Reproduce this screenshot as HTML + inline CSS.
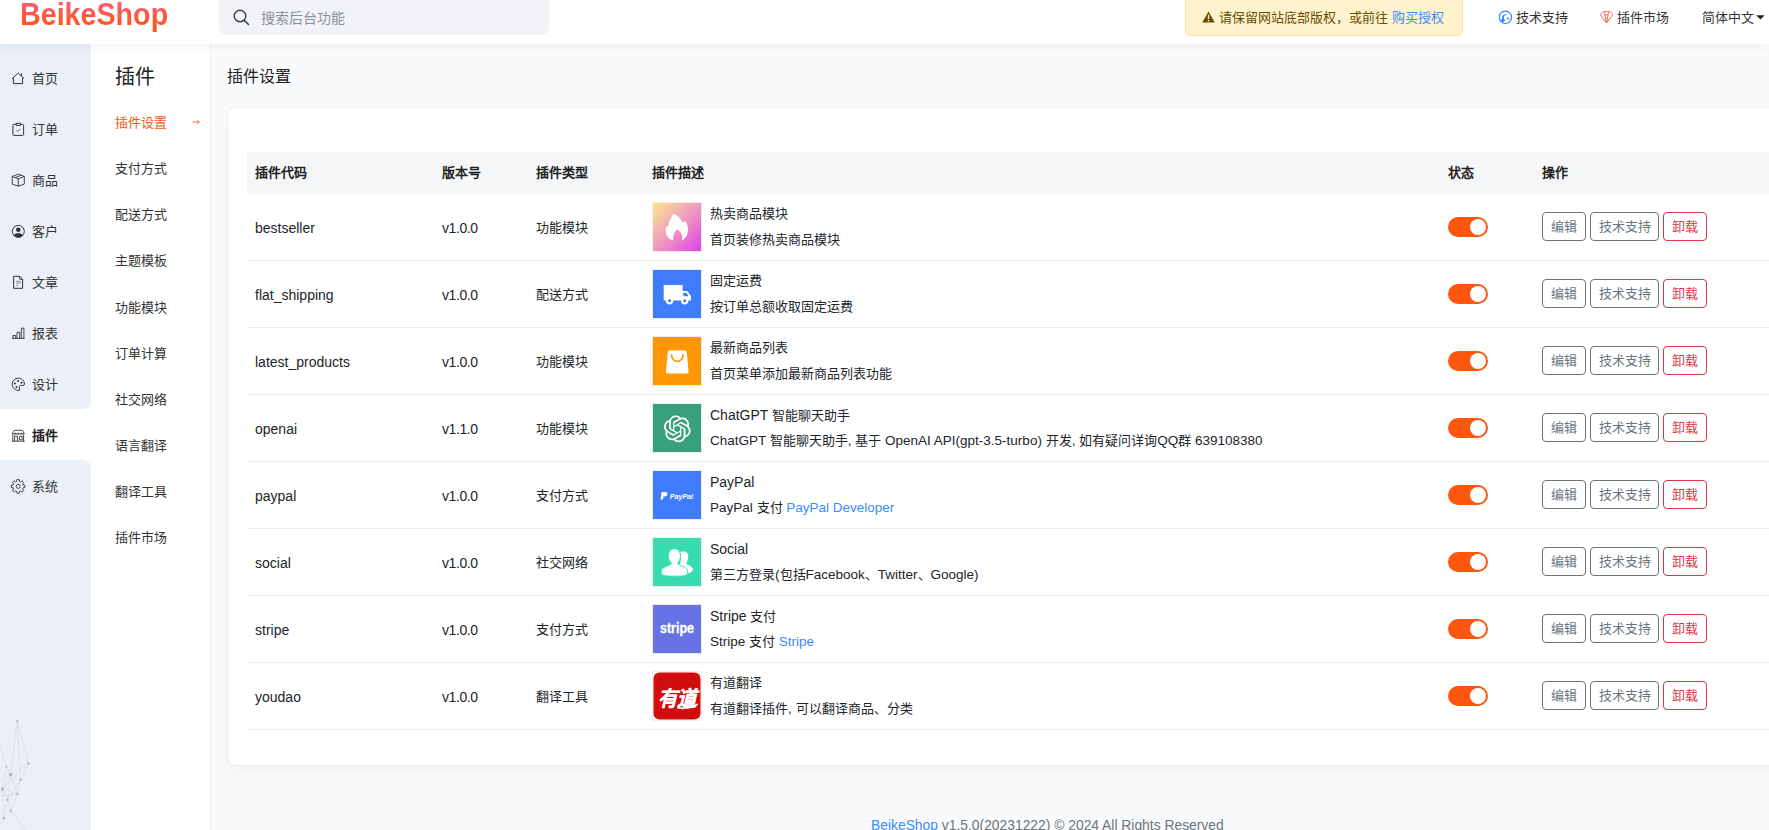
<!DOCTYPE html>
<html lang="zh-CN"><head><meta charset="utf-8">
<style>
*{box-sizing:border-box;margin:0;padding:0}
html,body{width:1769px;height:830px;overflow:hidden}
body{font-family:"Liberation Sans",sans-serif;font-size:13px;color:#212529;background:#f8fafc;position:relative}
.abs{position:absolute}
.nw{white-space:nowrap}
/* header */
#hd{left:0;top:0;width:1769px;height:44px;background:#fff;box-shadow:0 2px 12px rgba(0,0,0,.05);z-index:5}
#logo{left:20px;top:-4.3px;font-size:31.5px;font-weight:bold;line-height:36px;transform:scaleX(0.91);transform-origin:0 0;background:linear-gradient(180deg,#ff5a70 20%,#fd5619 85%);-webkit-background-clip:text;background-clip:text;color:transparent}
#search{left:219px;top:-6px;width:330px;height:41px;background:#f1f3f7;border-radius:8px}
#search .ph{left:42px;top:14px;font-size:14px;color:#8b9099;line-height:20px}
#alert{left:1185px;top:-6px;width:278px;height:42px;background:#fff3cd;border:1px solid #ffe69c;border-radius:5px;color:#664d03}
.hl{top:8px;line-height:20px;font-size:13px;color:#333}
/* sidebar */
#sb1a{left:0;top:44px;width:91px;height:365px;background:#ebeff8;border-bottom-right-radius:8px}
#sb1b{left:0;top:460px;width:91px;height:370px;background:#ebeff8;border-top-right-radius:8px}
#sb2{left:91px;top:44px;width:120px;height:786px;background:#fff;border-right:1px solid #efefef}
.mi{left:0;width:91px;height:51px}
.mi svg{position:absolute}
.mi span{position:absolute;left:32px;top:17px;line-height:20px;font-size:13px;color:#333}
.si{left:115px;line-height:20px;font-size:13px;color:#333}
/* content */
#ptitle{left:227px;top:66px;font-size:16px;line-height:22px;color:#222}
#card{left:228px;top:108px;width:1660px;height:657px;background:#fff;border-radius:6px;box-shadow:0 0 1.5px rgba(0,0,0,.13),0 5px 18px rgba(0,0,0,.04)}
#thead{left:247px;top:152px;width:1640px;height:42px;background:#f5f6f8}
.th{top:163px;line-height:20px;font-weight:bold;font-size:13px;color:#222}
.rowb{left:247px;width:1640px;height:1px;background:#e9ecef}
.cell{line-height:20px;font-size:13px;color:#212529}
.img{left:652px;width:50px;height:50px;border:1px solid #eceef0;overflow:hidden}
.img svg{display:block}
.ttl{left:710px;line-height:20px;font-size:13px;color:#212529}
.dsc{left:710px;line-height:20px;font-size:13px;color:#212529}
.lnk{color:#3b8cff}
.L{font-size:13.5px}
.L14{font-size:14px}
.tg{left:1448px;width:40px;height:20px;border-radius:10px;background:#fd560f}
.tg:after{content:"";position:absolute;left:21.5px;top:2px;width:16px;height:16px;border-radius:50%;background:#fff}
.btn{height:29px;border:1px solid #6c757d;border-radius:4px;color:#6c757d;font-size:13px;line-height:27px;text-align:center}
.btn.d{border-color:#dc3545;color:#dc3545}
#foot{left:871px;top:815px;font-size:13.85px;line-height:20px;color:#6c757d}
</style></head><body>
<div id="hd" class="abs">
  <div id="logo" class="abs nw">BeikeShop</div>
  <div id="search" class="abs">
    <svg class="abs" style="left:14px;top:15px" width="17" height="17" viewBox="0 0 17 17"><circle cx="7" cy="7" r="5.8" fill="none" stroke="#3a3f47" stroke-width="1.4"/><line x1="11.2" y1="11.2" x2="15.5" y2="15.5" stroke="#3a3f47" stroke-width="1.6" stroke-linecap="round"/></svg>
    <div class="ph abs nw">搜索后台功能</div>
  </div>
  <div id="alert" class="abs nw">
    <svg class="abs" style="left:16px;top:16px" width="13" height="12" viewBox="0 0 13 12"><path d="M6.5 0.5 L12.8 11.5 L0.2 11.5 Z" fill="#664d03"/><rect x="5.8" y="3.8" width="1.4" height="4.2" fill="#fff3cd"/><rect x="5.8" y="9" width="1.4" height="1.4" fill="#fff3cd"/></svg>
    <span class="abs" style="left:33px;top:13px;line-height:20px">请保留网站底部版权，或前往 <span class="lnk">购买授权</span></span>
  </div>
  <svg class="abs" style="left:1495px;top:5px" width="25" height="25" viewBox="0 0 25 25"><circle cx="10.4" cy="12.3" r="6.2" fill="none" stroke="#2f88ff" stroke-width="1.2"/><path d="M5.6 15.8 L8.2 17.6 C8.8 16.4,9.5 15.6,10.5 15.2 C9.6 14.6,8.6 13.6,8.8 12 C9.1 10.6,10.5 10,12.7 9.5 C11.8 9,10 9,8.6 9.8 C7.2 10.6,6.8 12,7.2 13.6 Z" fill="#2f88ff"/><circle cx="13" cy="13.5" r="1.1" fill="#2f88ff"/></svg>
  <div class="hl abs nw" style="left:1516px">技术支持</div>
  <svg class="abs" style="left:1596px;top:5px" width="25" height="25" viewBox="0 0 25 25"><defs><linearGradient id="dg" x1="0" y1="0" x2="0" y2="1"><stop offset="0" stop-color="#ff6a7a"/><stop offset="1" stop-color="#ff5410"/></linearGradient></defs><path d="M7.2 6.6 H14.5 L16.8 9.9 L10.5 18 L4.2 9.9 Z M8.2 6.8 L10.5 17.6 L12.8 6.8 M8.8 9.9 H12.4" fill="none" stroke="url(#dg)" stroke-width="0.95" stroke-linejoin="round"/></svg>
  <div class="hl abs nw" style="left:1617px">插件市场</div>
  <div class="hl abs nw" style="left:1702px">简体中文</div>
  <svg class="abs" style="left:1756px;top:15px" width="9" height="5" viewBox="0 0 9 5"><path d="M0.2 0.3 L8.6 0.3 L4.4 4.6 Z" fill="#222"/></svg>
</div>

<div class="abs" style="left:0;top:44px;width:91px;height:786px;background:#fff"></div>
<div id="sb1a" class="abs"></div>
<div id="sb1b" class="abs"></div>
<div id="sb2" class="abs"></div>
<!-- left menu -->
<div class="abs" style="left:0;top:0;width:91px;height:830px">
 <div class="mi abs" style="top:52px"><svg width="22" height="22" viewBox="0 0 22 22" style="left:8px;top:16px"><path d="M5.4 9.6 V15.6 H14.6 V9.6 M4.2 10.6 L10.3 5 L16.1 10.6 M13.5 5.4 V8" fill="none" stroke="#333" stroke-width="1"/></svg><span>首页</span></div>
 <div class="mi abs" style="top:103px"><svg width="22" height="22" viewBox="0 0 22 22" style="left:8px;top:16px"><path d="M8.2 5.3 H5.9 Q4.9 5.3 4.9 6.3 V15.4 Q4.9 16.4 5.9 16.4 H14.6 Q15.6 16.4 15.6 15.4 V6.3 Q15.6 5.3 14.6 5.3 H12.5 M8.2 4.3 H12.5 V6.4 H8.2 Z" fill="none" stroke="#333" stroke-width="1"/><path d="M8.2 11.3 L9.4 12.5 L12.7 10" fill="none" stroke="#555" stroke-width="0.8"/></svg><span>订单</span></div>
 <div class="mi abs" style="top:154px"><svg width="22" height="22" viewBox="0 0 22 22" style="left:8px;top:16px"><path d="M10.2 4.2 L16.3 6.4 V14.1 L10.3 16.2 L4.2 14.1 V6.4 Z M4.2 6.4 L10.3 8.8 L16.3 6.4 M10.3 8.8 V16.2 M7.2 7.6 L13.2 5.2" fill="none" stroke="#333" stroke-width="0.9" stroke-linejoin="round"/></svg><span>商品</span></div>
 <div class="mi abs" style="top:205px"><svg width="22" height="22" viewBox="0 0 22 22" style="left:8px;top:16px"><circle cx="10.3" cy="10.3" r="6" fill="none" stroke="#333" stroke-width="1"/><circle cx="10.3" cy="8.7" r="2.3" fill="#333"/><path d="M5.6 14.5 C6.5 12.8,8 12.2,10.3 12.2 C12.6 12.2,14.1 12.8,15 14.5 C13.8 15.8,12.2 16.4,10.3 16.4 C8.4 16.4,6.8 15.8,5.6 14.5 Z" fill="#333"/></svg><span>客户</span></div>
 <div class="mi abs" style="top:256px"><svg width="22" height="22" viewBox="0 0 22 22" style="left:8px;top:16px"><path d="M5.6 4.3 H11.6 L14.6 7.4 V16.3 H5.6 Z M11.6 4.3 V6.6 Q11.6 7.4 12.4 7.4 H14.6" fill="none" stroke="#333" stroke-width="1"/><path d="M8 9.3 H12.8 M8 11.1 H12.8 M8 13.4 H10" stroke="#777" stroke-width="0.8"/></svg><span>文章</span></div>
 <div class="mi abs" style="top:307px"><svg width="22" height="22" viewBox="0 0 22 22" style="left:8px;top:16px"><path d="M4 15.4 H16.7 M5 15.4 V12.5 H7.7 V15.4 M9 15.4 V9.3 H11.7 V15.4 M13.3 15.4 V5.2 H15.9 V15.4" fill="none" stroke="#333" stroke-width="0.9"/></svg><span>报表</span></div>
 <div class="mi abs" style="top:358px"><svg width="22" height="22" viewBox="0 0 22 22" style="left:8px;top:16px"><path d="M11.4 16.3 C7.5 16.8,4.2 14,4.2 10.2 C4.2 6.8,7 4.2,10.3 4.2 C13.7 4.2,16.4 6.8,16.4 10 Q16.4 11.3,15.2 11.4 L12.4 11.5 Q11.4 11.6,11.4 12.6 Z" fill="none" stroke="#333" stroke-width="1"/><circle cx="10.1" cy="6.9" r="1" fill="#333"/><circle cx="6.9" cy="9.5" r="1" fill="#333"/><circle cx="13.5" cy="8.8" r="1" fill="#333"/><circle cx="8.5" cy="13" r="1" fill="#333"/></svg><span>设计</span></div>
 <div class="mi abs" style="top:409px"><svg width="22" height="22" viewBox="0 0 22 22" style="left:8px;top:16px"><path d="M6.4 5.3 H14.3 Q15.5 6.5 16.3 9 H4.3 Q5.1 6.5 6.4 5.3 Z M4.8 9.6 V16.2 M15.6 9.6 V16.2 M4 16.2 H16.7 M6.6 16.2 V11.2 H9.4 V16.2 M11.4 11.4 H14.2 V14.8 H11.4 Z" fill="none" stroke="#333" stroke-width="0.9"/><path d="M6.5 9 L7.2 7.8 L7.9 9 M9.6 9 L10.3 7.8 L11 9 M12.8 9 L13.5 7.8 L14.2 9" fill="#333" stroke="#333" stroke-width="0.6"/></svg><span style="font-weight:bold;color:#222">插件</span></div>
 <div class="mi abs" style="top:460px"><svg width="22" height="22" viewBox="0 0 22 22" style="left:8px;top:16px"><path d="M15.00 8.99 L16.90 9.20 L16.90 11.60 L15.00 11.81 L14.56 12.87 L15.75 14.36 L14.06 16.05 L12.57 14.86 L11.51 15.30 L11.30 17.20 L8.90 17.20 L8.69 15.30 L7.63 14.86 L6.14 16.05 L4.45 14.36 L5.64 12.87 L5.20 11.81 L3.30 11.60 L3.30 9.20 L5.20 8.99 L5.64 7.93 L4.45 6.44 L6.14 4.75 L7.63 5.94 L8.69 5.50 L8.90 3.60 L11.30 3.60 L11.51 5.50 L12.57 5.94 L14.06 4.75 L15.75 6.44 L14.56 7.93 Z" fill="none" stroke="#333" stroke-width="0.9" stroke-linejoin="round"/><circle cx="10.2" cy="10.4" r="2" fill="none" stroke="#333" stroke-width="0.9"/></svg><span>系统</span></div>
 <svg class="abs" style="left:0;top:714px" width="40" height="116" viewBox="0 0 40 116"><path d="M17.2 7.1 L10.7 60.4 M17.2 7.1 L20.7 65.6 M17.2 7.1 L28.5 49.4 M28.5 49.4 L10.7 60.4 M28.5 49.4 L2.4 75 M28.5 49.4 L20.7 65.6 M10.7 60.4 L2.4 75 M10.7 60.4 L7.5 86 M10.7 60.4 L17.5 79.7 M2.4 75 L17.5 79.7 M2.4 75 L7.5 86 M20.7 65.6 L7.5 86 M20.7 65.6 L17.5 79.7 M17.5 79.7 L10.7 97 M7.5 86 L10.7 97 M7.5 86 L3.9 104.3 M10.7 97 L25 116 M2.4 75 L3.9 104.3 M0 30 L6.3 53 M6.3 53 L2.4 75 M0 82 L17.5 79.7 M0 66 L10.7 60.4 M3.9 104.3 L0 112 M6.3 53 L10.7 60.4" stroke="#d3d6db" stroke-width="0.6" fill="none"/><g fill="#b5b8bd"><circle cx="17.2" cy="7.1" r="1.2"/><circle cx="28.5" cy="49.4" r="1.2"/><circle cx="10.7" cy="60.4" r="1.7"/><circle cx="6.3" cy="53" r="0.9"/><circle cx="20.7" cy="65.6" r="1.2"/><circle cx="2.4" cy="75" r="1.6"/><circle cx="17.5" cy="79.7" r="1.2"/><circle cx="7.5" cy="86" r="1.2"/><circle cx="10.7" cy="97" r="1.2"/><circle cx="3.9" cy="104.3" r="1.2"/></g></svg>
</div>

<!-- second menu -->
<div class="abs nw" style="left:115px;top:64px;font-size:20px;line-height:26px;color:#222">插件</div>
<div class="si abs nw" style="top:113px;color:#fd560f">插件设置</div>
<svg class="abs" style="left:192px;top:119px" width="8" height="6" viewBox="0 0 8 6"><path d="M0.3 3 H7.3 M4.8 0.7 L7.3 3 L4.8 5.3" fill="none" stroke="#fd560f" stroke-width="0.8"/></svg>
<div class="si abs nw" style="top:159px">支付方式</div>
<div class="si abs nw" style="top:205px">配送方式</div>
<div class="si abs nw" style="top:251px">主题模板</div>
<div class="si abs nw" style="top:298px">功能模块</div>
<div class="si abs nw" style="top:344px">订单计算</div>
<div class="si abs nw" style="top:390px">社交网络</div>
<div class="si abs nw" style="top:436px">语言翻译</div>
<div class="si abs nw" style="top:482px">翻译工具</div>
<div class="si abs nw" style="top:528px">插件市场</div>

<!-- content -->
<div id="ptitle" class="abs nw">插件设置</div>
<div id="card" class="abs"></div>
<div id="thead" class="abs"></div>
<div class="th abs nw" style="left:255px">插件代码</div>
<div class="th abs nw" style="left:442px">版本号</div>
<div class="th abs nw" style="left:536px">插件类型</div>
<div class="th abs nw" style="left:652px">插件描述</div>
<div class="th abs nw" style="left:1448px">状态</div>
<div class="th abs nw" style="left:1542px">操作</div>
<div class="cell abs nw" style="left:255px;top:218px;font-size:14px">bestseller</div>
<div class="cell abs nw" style="left:442px;top:218px;font-size:14px;letter-spacing:-0.4px">v1.0.0</div>
<div class="cell abs nw" style="left:536px;top:218px">功能模块</div>
<div class="img abs" style="top:202px"><svg width="48" height="48" viewBox="0 0 48 48"><defs><linearGradient id="g1" x1="0" y1="0" x2="1" y2="1"><stop offset="0" stop-color="#fbe98a"/><stop offset="0.5" stop-color="#ef9ac0"/><stop offset="1" stop-color="#e040e6"/></linearGradient></defs><rect width="48" height="48" fill="url(#g1)"/><path d="M20.7 10.5 C24.5 12.5,28 15.5,29.4 19.6 C30.5 19,31.8 18.5,32.4 17.8 C34.5 21,35.2 25,34.9 28.5 C34.5 33,32 36,29 37.2 C30 32,27.5 28,24.4 26.5 C21.5 28.5,19.5 32.5,20.3 37.5 C16 36.5,13 33,12.7 28.5 C12.5 26,13 24,13.9 22.4 C14.5 23,15 23.2,15.3 23.5 C15.5 19,18 15,20.7 10.5 Z" fill="#fff"/></svg></div>
<div class="ttl abs nw" style="top:204px">热卖商品模块</div>
<div class="dsc abs nw" style="top:230px">首页装修热卖商品模块</div>
<div class="tg abs" style="top:217px"></div>
<div class="btn abs nw" style="left:1542px;top:212px;width:44px">编辑</div>
<div class="btn abs nw" style="left:1590px;top:212px;width:69px">技术支持</div>
<div class="btn d abs nw" style="left:1663px;top:212px;width:44px">卸载</div>
<div class="rowb abs" style="top:260px"></div>
<div class="cell abs nw" style="left:255px;top:285px;font-size:14px">flat_shipping</div>
<div class="cell abs nw" style="left:442px;top:285px;font-size:14px;letter-spacing:-0.4px">v1.0.0</div>
<div class="cell abs nw" style="left:536px;top:285px">配送方式</div>
<div class="img abs" style="top:269px"><svg width="48" height="48" viewBox="0 0 48 48"><rect width="48" height="48" fill="#3f7cfb"/><path d="M10.7 15 H29.6 V21 H34.2 L37.9 26 V30.6 H10.7 Z" fill="#fff"/><path d="M30.4 22.8 H33.4 L35.6 26.3 H30.4 Z" fill="#3f7cfb"/><circle cx="16.6" cy="30.7" r="3.7" fill="#fff"/><circle cx="16.6" cy="30.7" r="1.5" fill="#3f7cfb"/><circle cx="31.7" cy="30.7" r="3.7" fill="#fff"/><circle cx="31.7" cy="30.7" r="1.5" fill="#3f7cfb"/></svg></div>
<div class="ttl abs nw" style="top:271px">固定运费</div>
<div class="dsc abs nw" style="top:297px">按订单总额收取固定运费</div>
<div class="tg abs" style="top:284px"></div>
<div class="btn abs nw" style="left:1542px;top:279px;width:44px">编辑</div>
<div class="btn abs nw" style="left:1590px;top:279px;width:69px">技术支持</div>
<div class="btn d abs nw" style="left:1663px;top:279px;width:44px">卸载</div>
<div class="rowb abs" style="top:327px"></div>
<div class="cell abs nw" style="left:255px;top:352px;font-size:14px">latest_products</div>
<div class="cell abs nw" style="left:442px;top:352px;font-size:14px;letter-spacing:-0.4px">v1.0.0</div>
<div class="cell abs nw" style="left:536px;top:352px">功能模块</div>
<div class="img abs" style="top:336px"><svg width="48" height="48" viewBox="0 0 48 48"><rect width="48" height="48" fill="#ff9702"/><path d="M18.5 13.5 H32 Q33.5 13.5 33.7 15 L35.6 34.5 Q35.7 36.5 33.8 36.5 H14.6 Q12.7 36.5 12.9 34.5 L14.8 15 Q15 13.5 16.5 13.5 Z" fill="#fff"/><path d="M18.6 17.8 Q19 24.3 24.3 24.3 Q29.6 24.3 30 17.8" fill="none" stroke="#ff9702" stroke-width="1.7" stroke-linecap="round"/></svg></div>
<div class="ttl abs nw" style="top:338px">最新商品列表</div>
<div class="dsc abs nw" style="top:364px">首页菜单添加最新商品列表功能</div>
<div class="tg abs" style="top:351px"></div>
<div class="btn abs nw" style="left:1542px;top:346px;width:44px">编辑</div>
<div class="btn abs nw" style="left:1590px;top:346px;width:69px">技术支持</div>
<div class="btn d abs nw" style="left:1663px;top:346px;width:44px">卸载</div>
<div class="rowb abs" style="top:394px"></div>
<div class="cell abs nw" style="left:255px;top:419px;font-size:14px">openai</div>
<div class="cell abs nw" style="left:442px;top:419px;font-size:14px;letter-spacing:-0.4px">v1.1.0</div>
<div class="cell abs nw" style="left:536px;top:419px">功能模块</div>
<div class="img abs" style="top:403px"><svg width="48" height="48" viewBox="0 0 48 48"><rect width="48" height="48" fill="#38a07b"/><g transform="translate(10.8,11.4) scale(1.12)"><path fill="#fff" d="M22.2819 9.8211a5.9847 5.9847 0 0 0-.5157-4.9108 6.0462 6.0462 0 0 0-6.5098-2.9A6.0651 6.0651 0 0 0 4.9807 4.1818a5.9847 5.9847 0 0 0-3.9977 2.9 6.0462 6.0462 0 0 0 .7427 7.0966 5.98 5.98 0 0 0 .511 4.9107 6.051 6.051 0 0 0 6.5146 2.9001A5.9847 5.9847 0 0 0 13.2599 24a6.0557 6.0557 0 0 0 5.7718-4.2058 5.9894 5.9894 0 0 0 3.9977-2.9001 6.0557 6.0557 0 0 0-.7475-7.0729zm-9.022 12.6081a4.4755 4.4755 0 0 1-2.8764-1.0408l.1419-.0804 4.7783-2.7582a.7948.7948 0 0 0 .3927-.6813v-6.7369l2.02 1.1686a.071.071 0 0 1 .038.052v5.5826a4.504 4.504 0 0 1-4.4945 4.4944zm-9.6607-4.1254a4.4708 4.4708 0 0 1-.5346-3.0137l.142.0852 4.783 2.7582a.7712.7712 0 0 0 .7806 0l5.8428-3.3685v2.3324a.0804.0804 0 0 1-.0332.0615L9.74 19.9502a4.4992 4.4992 0 0 1-6.1408-1.6464zM2.3408 7.8956a4.485 4.485 0 0 1 2.3655-1.9728V11.6a.7664.7664 0 0 0 .3879.6765l5.8144 3.3543-2.0201 1.1685a.0757.0757 0 0 1-.071 0l-4.8303-2.7865A4.504 4.504 0 0 1 2.3408 7.872zm16.5963 3.8558L13.1038 8.364 15.1192 7.2a.0757.0757 0 0 1 .071 0l4.8303 2.7913a4.4944 4.4944 0 0 1-.6765 8.1042v-5.6772a.79.79 0 0 0-.407-.667zm2.0107-3.0231l-.142-.0852-4.7735-2.7818a.7759.7759 0 0 0-.7854 0L9.409 9.2297V6.8974a.0662.0662 0 0 1 .0284-.0615l4.8303-2.7866a4.4992 4.4992 0 0 1 6.6802 4.66zM8.3065 12.863l-2.02-1.1638a.0804.0804 0 0 1-.038-.0567V6.0742a4.4992 4.4992 0 0 1 7.3757-3.4537l-.142.0805L8.704 5.459a.7948.7948 0 0 0-.3927.6813zm1.0976-2.3654l2.602-1.4998 2.6069 1.4998v2.9994l-2.5974 1.4997-2.6067-1.4997Z"/></g></svg></div>
<div class="ttl abs nw" style="top:405px"><span class="L14">ChatGPT </span>智能聊天助手</div>
<div class="dsc abs nw" style="top:431px"><span class="L">ChatGPT </span>智能聊天助手<span class="L">, </span>基于<span class="L"> OpenAI API(gpt-3.5-turbo) </span>开发<span class="L">, </span>如有疑问详询<span class="L">QQ</span>群<span class="L"> 639108380</span></div>
<div class="tg abs" style="top:418px"></div>
<div class="btn abs nw" style="left:1542px;top:413px;width:44px">编辑</div>
<div class="btn abs nw" style="left:1590px;top:413px;width:69px">技术支持</div>
<div class="btn d abs nw" style="left:1663px;top:413px;width:44px">卸载</div>
<div class="rowb abs" style="top:461px"></div>
<div class="cell abs nw" style="left:255px;top:486px;font-size:14px">paypal</div>
<div class="cell abs nw" style="left:442px;top:486px;font-size:14px;letter-spacing:-0.4px">v1.0.0</div>
<div class="cell abs nw" style="left:536px;top:486px">支付方式</div>
<div class="img abs" style="top:470px"><svg width="48" height="48" viewBox="0 0 48 48"><rect width="48" height="48" fill="#3f7cfb"/><path d="M8.6 21 H12.4 Q14.8 21.2 14.4 23.4 Q14 25.6 11.6 25.6 H10.5 L10 28.4 H7.5 Z" fill="#fff"/><text x="16.8" y="27.6" font-family="Liberation Sans" font-weight="bold" font-style="italic" font-size="7.6" fill="#fff" textLength="23.2" lengthAdjust="spacingAndGlyphs">PayPal</text></svg></div>
<div class="ttl abs nw" style="top:472px"><span class="L14">PayPal</span></div>
<div class="dsc abs nw" style="top:498px"><span class="L">PayPal </span>支付 <span class="lnk L">PayPal Developer</span></div>
<div class="tg abs" style="top:485px"></div>
<div class="btn abs nw" style="left:1542px;top:480px;width:44px">编辑</div>
<div class="btn abs nw" style="left:1590px;top:480px;width:69px">技术支持</div>
<div class="btn d abs nw" style="left:1663px;top:480px;width:44px">卸载</div>
<div class="rowb abs" style="top:528px"></div>
<div class="cell abs nw" style="left:255px;top:553px;font-size:14px">social</div>
<div class="cell abs nw" style="left:442px;top:553px;font-size:14px;letter-spacing:-0.4px">v1.0.0</div>
<div class="cell abs nw" style="left:536px;top:553px">社交网络</div>
<div class="img abs" style="top:537px"><svg width="48" height="48" viewBox="0 0 48 48"><rect width="48" height="48" fill="#37dcb0"/><path d="M31 13.5 C34 13.5,35.5 16,35.3 19.5 C35.1 22,34 24,33 25.2 C34.5 26.5,37 27.5,38.8 29 C40.5 30.5,40 33.5,37.5 34.8 L34.8 35.2 L26 27 C27.5 25,28.5 22,28 18 C27.8 16,27.2 14.5,26.6 14 C27.8 13.6,29.5 13.5,31 13.5 Z" fill="#fff"/><path d="M21.4 10.7 C25.5 10.7,27.6 14,27.4 18.3 C27.2 21.5,26 23.8,24.5 25.5 C26 27,29.5 28.3,32 29.5 C34.5 30.8,35 32,34.6 35.5 C34.3 37.6,31 38.2,21.5 38.2 C12 38.2,8.7 37.6,8.4 35.5 C8 32,9 30.5,11.4 29.3 C14 28,17 27,18.6 25.5 C17 23.8,15.6 21.5,15.4 18.3 C15.2 14,17.3 10.7,21.4 10.7 Z" fill="#fff" stroke="#37dcb0" stroke-width="0.9"/></svg></div>
<div class="ttl abs nw" style="top:539px"><span class="L14">Social</span></div>
<div class="dsc abs nw" style="top:565px">第三方登录<span class="L">(</span>包括<span class="L">Facebook</span>、<span class="L">Twitter</span>、<span class="L">Google)</span></div>
<div class="tg abs" style="top:552px"></div>
<div class="btn abs nw" style="left:1542px;top:547px;width:44px">编辑</div>
<div class="btn abs nw" style="left:1590px;top:547px;width:69px">技术支持</div>
<div class="btn d abs nw" style="left:1663px;top:547px;width:44px">卸载</div>
<div class="rowb abs" style="top:595px"></div>
<div class="cell abs nw" style="left:255px;top:620px;font-size:14px">stripe</div>
<div class="cell abs nw" style="left:442px;top:620px;font-size:14px;letter-spacing:-0.4px">v1.0.0</div>
<div class="cell abs nw" style="left:536px;top:620px">支付方式</div>
<div class="img abs" style="top:604px"><svg width="48" height="48" viewBox="0 0 48 48"><rect width="48" height="48" fill="#6773e4"/><text x="24" y="27.8" text-anchor="middle" font-family="Liberation Sans" font-weight="bold" font-size="14.5" fill="#fff" stroke="#fff" stroke-width="0.3" textLength="34" lengthAdjust="spacingAndGlyphs">stripe</text></svg></div>
<div class="ttl abs nw" style="top:606px"><span class="L14">Stripe </span>支付</div>
<div class="dsc abs nw" style="top:632px"><span class="L">Stripe </span>支付 <span class="lnk L">Stripe</span></div>
<div class="tg abs" style="top:619px"></div>
<div class="btn abs nw" style="left:1542px;top:614px;width:44px">编辑</div>
<div class="btn abs nw" style="left:1590px;top:614px;width:69px">技术支持</div>
<div class="btn d abs nw" style="left:1663px;top:614px;width:44px">卸载</div>
<div class="rowb abs" style="top:662px"></div>
<div class="cell abs nw" style="left:255px;top:687px;font-size:14px">youdao</div>
<div class="cell abs nw" style="left:442px;top:687px;font-size:14px;letter-spacing:-0.4px">v1.0.0</div>
<div class="cell abs nw" style="left:536px;top:687px">翻译工具</div>
<div class="img abs" style="top:671px"><svg width="48" height="48" viewBox="0 0 48 48"><rect width="48" height="48" fill="#fff"/><rect x="0.5" y="0.5" width="47" height="47" rx="6" fill="#d20d0d"/><text x="24.3" y="33.5" text-anchor="middle" font-family="Liberation Sans" font-weight="bold" font-style="italic" font-size="21" fill="#fff" stroke="#fff" stroke-width="0.3" textLength="39" lengthAdjust="spacingAndGlyphs">有道</text><path d="M25 35.8 Q35 37.5 44 32.5" fill="none" stroke="#fff" stroke-width="1.8" stroke-linecap="round"/></svg></div>
<div class="ttl abs nw" style="top:673px">有道翻译</div>
<div class="dsc abs nw" style="top:699px">有道翻译插件<span class="L">, </span>可以翻译商品、分类</div>
<div class="tg abs" style="top:686px"></div>
<div class="btn abs nw" style="left:1542px;top:681px;width:44px">编辑</div>
<div class="btn abs nw" style="left:1590px;top:681px;width:69px">技术支持</div>
<div class="btn d abs nw" style="left:1663px;top:681px;width:44px">卸载</div>
<div class="rowb abs" style="top:729px"></div>
<div id="foot" class="abs nw"><span class="lnk">BeikeShop</span> v1.5.0(20231222) © 2024 All Rights Reserved</div>
</body></html>
